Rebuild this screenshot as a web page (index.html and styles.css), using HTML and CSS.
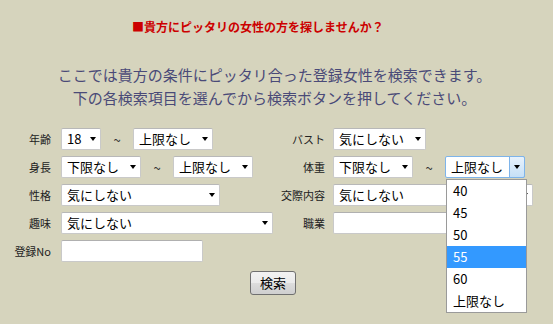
FILE: index.html
```html
<!DOCTYPE html>
<html>
<head>
  <meta charset="utf-8">
  <link rel="stylesheet" href="styles.css">
</head>
<body>
  <p class="lead">■貴方にピッタリの女性の方を探しませんか？</p>
  <p class="intro">ここでは貴方の条件にピッタリ合った登録女性を検索できます。<br>下の各検索項目を選んでから検索ボタンを押してください。</p>

  <form class="search">
    <div class="grid">
      <label class="lbl">年齢</label>
      <div class="ctl">
        <span class="sel w40"><select><option>18</option></select></span>
        <span class="tilde">~</span>
        <span class="sel w80"><select><option>上限なし</option></select></span>
      </div>
      <label class="lbl lbl-r">バスト</label>
      <div class="ctl">
        <span class="sel w93"><select><option>気にしない</option></select></span>
      </div>

      <label class="lbl">身長</label>
      <div class="ctl">
        <span class="sel w80"><select><option>下限なし</option></select></span>
        <span class="tilde">~</span>
        <span class="sel w80"><select><option>上限なし</option></select></span>
      </div>
      <label class="lbl lbl-r">体重</label>
      <div class="ctl">
        <span class="sel w80"><select><option>下限なし</option></select></span>
        <span class="tilde">~</span>
        <span class="sel w80 open">
          <select><option>上限なし</option></select>
        </span>
      </div>

      <label class="lbl">性格</label>
      <div class="ctl">
        <span class="sel w160"><select><option>気にしない</option></select></span>
      </div>
      <label class="lbl lbl-r">交際内容</label>
      <div class="ctl">
        <span class="sel w200"><select><option>気にしない</option></select></span>
      </div>

      <label class="lbl">趣味</label>
      <div class="ctl">
        <span class="sel w212"><select><option>気にしない</option></select></span>
      </div>
      <label class="lbl lbl-r">職業</label>
      <div class="ctl">
        <input type="text" class="txt">
      </div>

      <label class="lbl">登録No</label>
      <div class="ctl">
        <input type="text" class="txt">
      </div>
    </div>

    <div class="actions">
      <button type="button" class="btn">検索</button>
    </div>
  </form>

  <div class="dropdown">
    <div class="opt">40</div>
    <div class="opt">45</div>
    <div class="opt">50</div>
    <div class="opt hl">55</div>
    <div class="opt">60</div>
    <div class="opt">上限なし</div>
  </div>
</body>
</html>
```

FILE: styles.css
```css
html {
  background: #d6d4bd;
}
body {
  position: relative;
  margin: 0;
  min-height: 324px;
  font-family: "Noto Sans CJK JP", "Noto Sans", sans-serif;
  color: #222;
}
.lead {
  margin: 0;
  padding: 19px 0 0 132px;
  font-size: 12px;
  line-height: 16px;
  font-weight: bold;
  color: #cc0000;
}
.intro {
  margin: 28px 0 0 0;
  text-align: center;
  padding-right: 4px;
  font-size: 15px;
  line-height: 23px;
  color: #4a4a78;
}
.search {
  margin-top: 19px;
}
.grid {
  display: grid;
  grid-template-columns: 61px 214px 58px 1fr;
  row-gap: 6px;
  align-items: center;
}
.lbl {
  font-size: 11px;
  line-height: 22px;
  text-align: right;
  padding-right: 10px;
  color: #222;
}
.lbl-r {
  padding-right: 8px;
}
.ctl {
  display: flex;
  align-items: center;
  height: 22px;
}
.tilde {
  width: 32px;
  text-align: center;
  font-size: 13px;
  color: #333;
}
.sel {
  position: relative;
  display: block;
  height: 22px;
}
.sel select {
  -webkit-appearance: none;
  appearance: none;
  display: block;
  width: 100%;
  height: 22px;
  margin: 0;
  padding: 0 0 0 5px;
  border: 1px solid #c9c9c9;
  border-top-color: #b8b8b8;
  border-radius: 2px;
  background: #fff;
  font-family: "Noto Sans CJK JP", sans-serif;
  font-size: 13px;
  line-height: 20px;
  color: #000;
}
.sel::after {
  content: "";
  position: absolute;
  right: 5px;
  top: 9px;
  border-left: 3.5px solid transparent;
  border-right: 3.5px solid transparent;
  border-top: 4px solid #000;
}
.w40 { width: 40px; }
.w80 { width: 80px; }
.w93 { width: 93px; }
.w160 { width: 159px; }
.w200 { width: 200px; }
.w212 { width: 212px; }

.sel.open select {
  border-color: #7eb4ea;
}
.sel.open::before {
  content: "";
  position: absolute;
  right: 0;
  top: 0;
  width: 16px;
  height: 22px;
  box-sizing: border-box;
  border: 1px solid #7eb4ea;
  border-radius: 0 2px 2px 0;
  background: linear-gradient(#e8f2fc, #c6e0f7);
}
/* open list of the weight select, drawn over the rows below */
.dropdown {
  position: absolute;
  left: 446px;
  top: 179px;
  width: 79px;
  background: #fff;
  border: 1px solid #9a9a9a;
  z-index: 5;
}
.opt {
  height: 22px;
  line-height: 22px;
  padding-left: 6px;
  font-size: 13px;
  color: #000;
}
.opt.hl {
  background: #3399ff;
  color: #fff;
}
.txt {
  box-sizing: border-box;
  width: 142px;
  height: 22px;
  margin: 0;
  border: 1px solid #c9c9c9;
  border-top-color: #b0b0b0;
  border-radius: 2px;
  background: #fff;
}
.actions {
  text-align: center;
  padding-right: 7px;
  margin-top: 7px;
}
.btn {
  width: 46px;
  height: 24px;
  padding: 0;
  border: 1px solid #707070;
  border-radius: 3px;
  background: linear-gradient(#f2f2f2 0%, #ebebeb 50%, #dddddd 51%, #cfcfcf 100%);
  font-family: "Noto Sans CJK JP", sans-serif;
  font-size: 13px;
  line-height: 20px;
  color: #000;
}
```
